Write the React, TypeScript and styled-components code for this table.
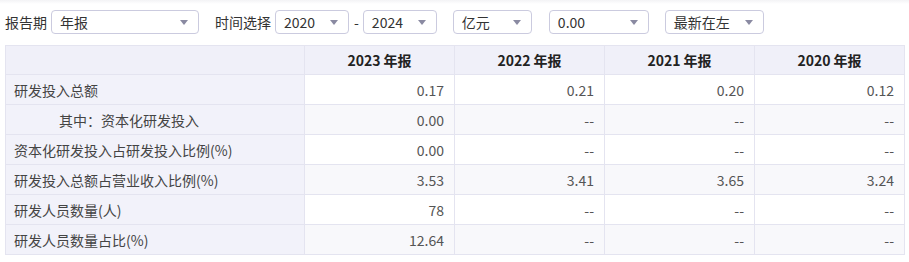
import styled, { createGlobalStyle } from 'styled-components';

const GlobalStyle = createGlobalStyle`
  html, body {
    margin: 0;
    padding: 0;
    background: #fff;
    font-family: "Noto Sans CJK SC", "Noto Sans", sans-serif;
    color: #333;
  }
`;

const Page = styled.div`
  padding: 0 5px;
  background: linear-gradient(#f3f3f5, #fff 4px);
  padding-top: 10px;
`;

const Toolbar = styled.div`
  display: flex;
  align-items: center;
  height: 24px;
`;

const Label = styled.span<{ $ml?: number }>`
  font-size: 14px;
  line-height: 24px;
  color: #333;
  margin-left: ${({ $ml }) => $ml ?? 0}px;
  margin-right: 4px;
  white-space: nowrap;
`;

const Select = styled.div<{ $w: number; $ml?: number }>`
  box-sizing: border-box;
  width: ${({ $w }) => $w}px;
  height: 24px;
  margin-left: ${({ $ml }) => $ml ?? 0}px;
  border: 1px solid #cbcbdf;
  border-radius: 4px;
  display: flex;
  align-items: center;
  justify-content: space-between;
  padding: 0 10px 0 8px;
  font-size: 14px;
  color: #333;
  background: #fff;
`;

const Dash = styled.span`
  font-size: 14px;
  margin: 0 4px 0 5px;
`;

const Arrow = styled.span`
  width: 0;
  height: 0;
  border-left: 4.5px solid transparent;
  border-right: 4.5px solid transparent;
  border-top: 5px solid #8a8aa2;
`;

const Table = styled.table`
  margin-top: 11px;
  width: 900px;
  border-collapse: collapse;
  table-layout: fixed;
  font-size: 14px;
`;

const Th = styled.th`
  height: 28px;
  padding: 0;
  background: #f0f0f9;
  border: 1px solid #e4e4f0;
  font-weight: 700;
  color: #222;
  text-align: center;
`;

const Row = styled.tr<{ $even: boolean }>`
  height: 30px;
  background: ${({ $even }) => ($even ? '#f8f8fb' : '#fff')};
`;

const NameCell = styled.td<{ $indent?: boolean }>`
  padding: 0 0 0 ${({ $indent }) => ($indent ? 53 : 8)}px;
  background: #f2f2fa;
  border: 1px solid #e4e4f0;
  color: #444;
  white-space: nowrap;
`;

const ValueCell = styled.td`
  padding: 0 10px 0 0;
  border: 1px solid #e4e4f0;
  text-align: right;
  color: #555;
`;

const years = ['2023 年报', '2022 年报', '2021 年报', '2020 年报'];

const rows: { name: string; indent?: boolean; values: string[] }[] = [
  { name: '研发投入总额', values: ['0.17', '0.21', '0.20', '0.12'] },
  { name: '其中：资本化研发投入', indent: true, values: ['0.00', '--', '--', '--'] },
  { name: '资本化研发投入占研发投入比例(%)', values: ['0.00', '--', '--', '--'] },
  { name: '研发投入总额占营业收入比例(%)', values: ['3.53', '3.41', '3.65', '3.24'] },
  { name: '研发人员数量(人)', values: ['78', '--', '--', '--'] },
  { name: '研发人员数量占比(%)', values: ['12.64', '--', '--', '--'] },
];

const App = () => {
  return (
    <Page>
      <GlobalStyle />
      <Toolbar>
        <Label>报告期</Label>
        <Select $w={148}>
          <span>年报</span>
          <Arrow />
        </Select>
        <Label $ml={16}>时间选择</Label>
        <Select $w={74}>
          <span>2020</span>
          <Arrow />
        </Select>
        <Dash>-</Dash>
        <Select $w={74}>
          <span>2024</span>
          <Arrow />
        </Select>
        <Select $w={79} $ml={16}>
          <span>亿元</span>
          <Arrow />
        </Select>
        <Select $w={100} $ml={17}>
          <span>0.00</span>
          <Arrow />
        </Select>
        <Select $w={99} $ml={16}>
          <span>最新在左</span>
          <Arrow />
        </Select>
      </Toolbar>
      <Table>
        <colgroup>
          <col style={{ width: 299 }} />
          <col style={{ width: 150 }} />
          <col style={{ width: 150 }} />
          <col style={{ width: 150 }} />
          <col style={{ width: 150 }} />
        </colgroup>
        <thead>
          <tr>
            <Th />
            {years.map((y) => (
              <Th key={y}>{y}</Th>
            ))}
          </tr>
        </thead>
        <tbody>
          {rows.map((r, i) => (
            <Row key={r.name} $even={i % 2 === 1}>
              <NameCell $indent={r.indent}>{r.name}</NameCell>
              {r.values.map((v, j) => (
                <ValueCell key={j}>{v}</ValueCell>
              ))}
            </Row>
          ))}
        </tbody>
      </Table>
    </Page>
  );
};

export default App;
